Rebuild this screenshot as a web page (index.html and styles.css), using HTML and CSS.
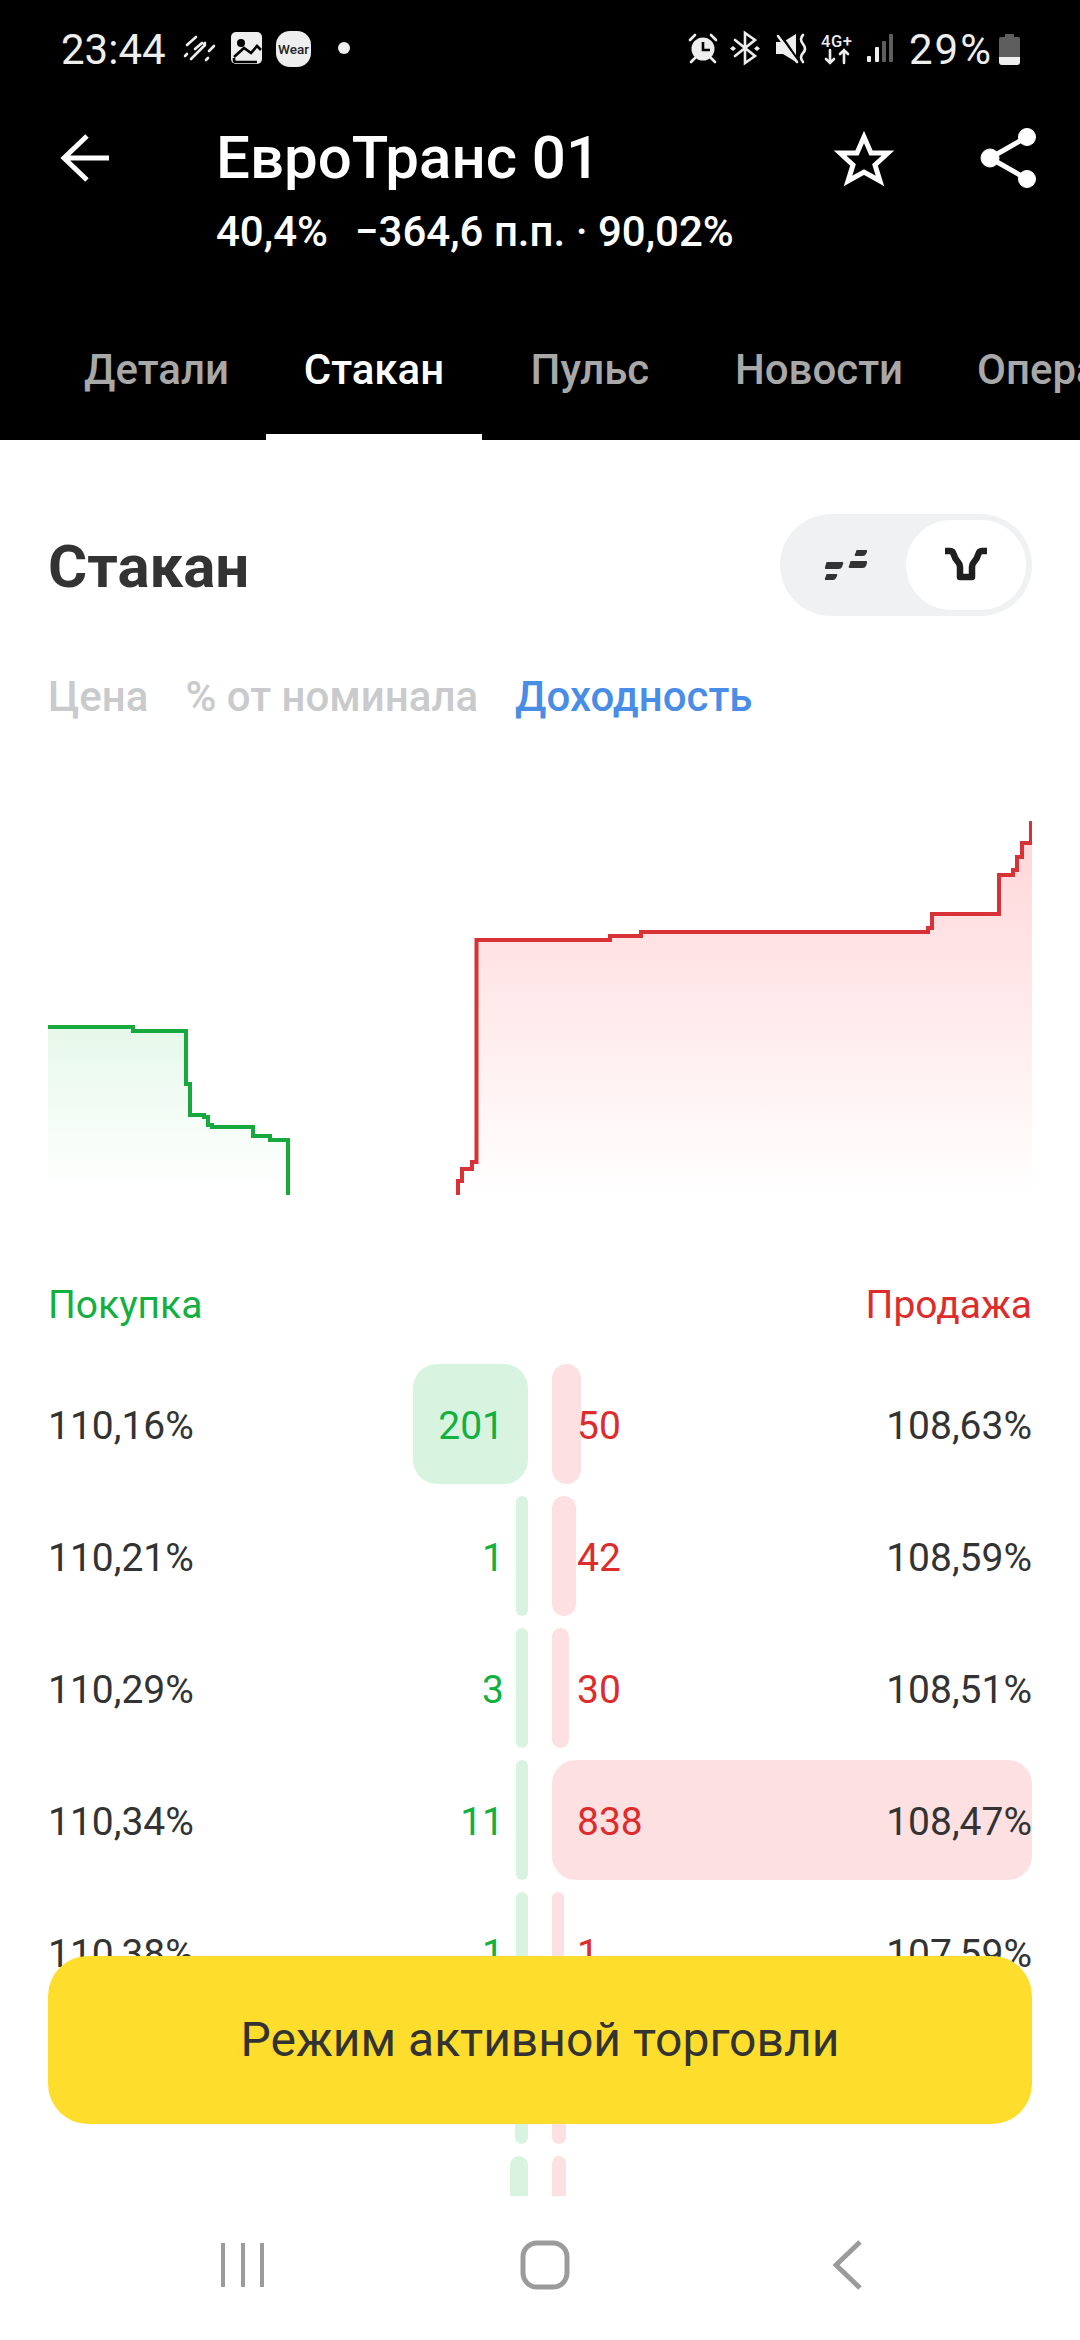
FILE: index.html
```html
<!DOCTYPE html>
<html lang="ru">
<head>
    <meta charset="UTF-8">
    <meta name="viewport" content="width=device-width, initial-scale=1.0">
    <title>ЕвроТранс 01 - Стакан</title>
    <link rel="stylesheet" href="styles.css">
</head>
<body>
    <div class="page">
        <div class="top">
            <div class="status">
                <span class="clock">23:44</span>
                <svg class="status-left" viewBox="181 30 170 40">
                    <g class="stroke-white">
                        <path d="M186 46l9-8M194 50l7-6M190 60l14-14M205 61l2-2M208 52l5-5M184 57l2-2M203 45l1-1"/>
                    </g>
                    <rect class="fill-light" x="230" y="33" width="31" height="32" rx="5"/>
                    <circle class="fill-black" cx="240" cy="44" r="4"/>
                    <path class="stroke-black" d="M233 58l10-9 7 5 6-7 4 4M233 59v2q0 2 2 2h21"/>
                    <rect class="fill-light" x="275" y="32" width="35" height="36" rx="14"/>
                    <text class="wear" x="292.500" y="54.500" text-anchor="middle">Wear</text>
                    <circle class="fill-light" cx="343" cy="49" r="6"/>
                </svg>
                <svg class="status-right" viewBox="688 30 206 40">
                    <circle class="fill-light" cx="703" cy="50" r="11.500"/>
                    <path class="stroke-black" d="M703 43v8h7"/>
                    <path class="stroke-white" d="M690 41l5-5M716 41l-5-5M695 59l-4 4M711 59l4 4"/>
                    <path class="stroke-white" d="M735 41l20 16-10 7V34l10 7-20 16"/>
                    <path class="fill-light" d="M733 47l3 2.500-3 2.500-3-2.500zM757 47l3 2.500-3 2.500-3-2.500z"/>
                    <path class="fill-light" d="M776 43h7l13-8v28l-13-8h-7z"/>
                    <path class="stroke-black" d="M780 35l19 28"/>
                    <path class="stroke-white" d="M778 37l19 26M803 36q-4 4 0 9t0 9 0 9"/>
                    <text class="net" x="821" y="48">4G+</text>
                    <path class="stroke-white" d="M830 51v13M826 60l4 4 4-4M844 64V51M840 55l4-4 4 4"/>
                    <rect class="fill-light" x="867" y="57" width="4" height="6" rx="1"/>
                    <rect class="fill-light" x="875" y="48" width="4" height="15" rx="1"/>
                    <rect class="fill-dim" x="882" y="42" width="4" height="21" rx="1"/>
                    <rect class="fill-dim" x="889" y="35" width="4" height="28" rx="1"/>
                </svg>
                <span class="percent">29%</span>
                <svg class="battery" viewBox="0 0 21 31">
                    <path class="fill-dim" d="M6 0h9v3h4q2 0 2 2v18H0V5q0-2 2-2h4z"/>
                    <path class="fill-light" d="M0 23h21v5q0 3-3 3H3q-3 0-3-3z"/>
                </svg>
            </div>

            <div class="header">
                <svg class="back" viewBox="60 128 50 60">
                    <path d="M109 158H64M87 136l-23 22 23 22"/>
                </svg>
                <div class="title-block">
                    <div class="title">ЕвроТранс 01</div>
                    <div class="subtitle"><span>40,4%</span><span class="spread">−364,6 п.п. · 90,02%</span></div>
                </div>
                <svg class="star" viewBox="834 128 60 60">
                    <path d="M864 137l7 16h17l-13 12 5 16-16-9-16 9 5-16-13-12h17z"/>
                </svg>
                <svg class="share" viewBox="980 128 60 60">
                    <circle cx="1027" cy="137" r="8.500"/>
                    <circle cx="990" cy="158" r="9"/>
                    <circle cx="1027" cy="179" r="8.500"/>
                    <path d="M1027 137l-37 21 37 21"/>
                </svg>
            </div>

            <div class="tabs">
                <div class="tab">Детали</div>
                <div class="tab active">Стакан</div>
                <div class="tab">Пульс</div>
                <div class="tab">Новости</div>
                <div class="tab">Операции</div>
            </div>
        </div>

        <div class="content">
            <div class="book-head">
                <h2>Стакан</h2>
                <div class="view-switch">
                    <div class="view-btn">
                        <svg viewBox="825 549 42 32">
                            <path d="M827 562h15q2 0 1 2l-1 3q-1 2-3 2h-13q-2 0-1-2l1-3q0-2 1-2zM827 574h9q2 0 1 2l-1 2q-1 2-3 2h-7q-2 0-1-2l1-2q0-2 1-2zM851 561h15q2 0 1 2l-1 3q-1 2-3 2h-13q-2 0-1-2l1-3q0-2 1-2zM857 550h9q2 0 1 2l-1 2q-1 2-3 2h-7q-2 0-1-2l1-2q0-2 1-2z"/>
                        </svg>
                    </div>
                    <div class="view-btn on">
                        <svg viewBox="942 546 48 38">
                            <path d="M945 551H950Q953 551 954 555Q955 559 958 562Q960 564 960 567V577H972V567Q972 564 974 562Q977 559 978 555Q979 551 982 551H987"/>
                        </svg>
                    </div>
                </div>
            </div>

            <div class="modes">
                <span>Цена</span>
                <span>% от номинала</span>
                <span class="current">Доходность</span>
            </div>

            <svg class="depth" viewBox="48 810 984 400">
                <defs>
                    <linearGradient id="bidFill" gradientUnits="userSpaceOnUse" x1="0" y1="1027" x2="0" y2="1192">
                        <stop class="bid-top" offset="0"/>
                        <stop class="fade" offset="1"/>
                    </linearGradient>
                    <linearGradient id="askFill" gradientUnits="userSpaceOnUse" x1="0" y1="830" x2="0" y2="1195">
                        <stop class="ask-top" offset="0"/>
                        <stop class="fade" offset="1"/>
                    </linearGradient>
                </defs>
                <path class="bid-area" d="M48 1027H133V1031H186V1084H190V1115H204V1117H208V1125H212V1127H253V1136H270V1140H288V1195H48z"/>
                <path class="ask-area" d="M458 1195V1181H462V1169H472V1162H476.500V940H610V936H641V932H928V928H932V914H999V875H1013V870H1017V857H1022V843H1032V1195z"/>
                <path class="bid-line" d="M48 1027H133V1031H186V1084H190V1115H204V1117H208V1125H212V1127H253V1136H270V1140H288V1195"/>
                <path class="ask-line" d="M458 1195V1181H462V1169H472V1162H476.500V940H610V936H641V932H928V928H932V914H999V875H1013V870H1017V857H1022V843H1031V821"/>
            </svg>

            <div class="sides">
                <span class="buy">Покупка</span>
                <span class="sell">Продажа</span>
            </div>

            <div class="book">
                <div class="row">
                    <div class="cell bid"><i class="bar" style="width:115px"></i><span>110,16%</span><b>201</b></div>
                    <div class="cell ask"><i class="bar" style="width:29px"></i><b>50</b><span>108,63%</span></div>
                </div>
                <div class="row">
                    <div class="cell bid"><i class="bar" style="width:12px"></i><span>110,21%</span><b>1</b></div>
                    <div class="cell ask"><i class="bar" style="width:24px"></i><b>42</b><span>108,59%</span></div>
                </div>
                <div class="row">
                    <div class="cell bid"><i class="bar" style="width:12px"></i><span>110,29%</span><b>3</b></div>
                    <div class="cell ask"><i class="bar" style="width:17px"></i><b>30</b><span>108,51%</span></div>
                </div>
                <div class="row">
                    <div class="cell bid"><i class="bar" style="width:12px"></i><span>110,34%</span><b>11</b></div>
                    <div class="cell ask"><i class="bar" style="width:480px"></i><b>838</b><span>108,47%</span></div>
                </div>
                <div class="row">
                    <div class="cell bid"><i class="bar" style="width:12px"></i><span>110,38%</span><b>1</b></div>
                    <div class="cell ask"><i class="bar" style="width:12px"></i><b>1</b><span>107,59%</span></div>
                </div>
                <div class="row">
                    <div class="cell bid"><i class="bar" style="width:13px"></i></div>
                    <div class="cell ask"><i class="bar" style="width:14px"></i></div>
                </div>
                <div class="row">
                    <div class="cell bid"><i class="bar" style="width:18px"></i></div>
                    <div class="cell ask"><i class="bar" style="width:14px"></i></div>
                </div>
            </div>
        </div>

        <div class="navbar">
            <svg class="nav-recent" viewBox="0 0 48 48"><path d="M4 2v44M24 2v44M43 2v44"/></svg>
            <svg class="nav-home" viewBox="0 0 50 50"><rect x="3" y="3" width="44" height="44" rx="14"/></svg>
            <svg class="nav-back" viewBox="0 0 30 50"><path d="M27 2L3 25l24 23"/></svg>
        </div>

        <div class="trade-btn">Режим активной торговли</div>
    </div>
</body>
</html>
```

FILE: styles.css
```css
body {
    margin: 0;
    background: #fff;
    font-family: Roboto, "Noto Sans", sans-serif;
    color: #333;
}
.page {
    position: relative;
    width: 1080px;
    height: 2340px;
    overflow: hidden;
}

/* black top part */
.top {
    background: #000;
    color: #fff;
    height: 440px;
}
.status {
    display: flex;
    align-items: center;
    height: 98px;
    padding: 0 60px 0 61px;
    color: #eee;
    font-size: 42px;
}
.status-left {
    width: 170px;
    height: 40px;
    margin-left: 16px;
}
.status-right {
    width: 206px;
    height: 40px;
    margin-left: auto;
}
.percent {
    margin-left: 15px;
    letter-spacing: 2px;
}
.battery {
    width: 21px;
    height: 31px;
    margin-left: 6px;
}
.stroke-white {
    fill: none;
    stroke: #eee;
    stroke-width: 2.6;
    stroke-linecap: round;
}
.stroke-black {
    fill: none;
    stroke: #000;
    stroke-width: 2.6;
}
.fill-light {
    fill: #eee;
}
.fill-dim {
    fill: #5e5e5e;
}
.fill-black {
    fill: #000;
}
.wear {
    font-size: 13.500px;
    font-weight: 500;
    fill: #222;
}
.net {
    font-size: 16.500px;
    font-weight: 500;
    letter-spacing: 0.6px;
    fill: #eee;
}

.header {
    display: flex;
    align-items: flex-start;
    height: 202px;
    padding-top: 27px;
    box-sizing: border-box;
}
.back {
    width: 50px;
    height: 60px;
    margin: 3px 0 0 60px;
    fill: none;
    stroke: #fff;
    stroke-width: 5;
}
.title-block {
    flex: 1;
    margin-left: 106px;
}
.title {
    font-size: 60px;
    font-weight: 500;
    line-height: 66px;
}
.subtitle {
    margin-top: 17px;
    font-size: 42px;
    font-weight: 500;
    line-height: 48px;
    white-space: nowrap;
}
.spread {
    margin-left: 27px;
}
.star {
    width: 60px;
    height: 60px;
    margin-top: 3px;
    fill: none;
    stroke: #fff;
    stroke-width: 5;
}
.share {
    width: 60px;
    height: 60px;
    margin: 3px 40px 0 86px;
    fill: #fff;
    stroke: #fff;
}
.share path {
    fill: none;
    stroke-width: 5;
}

.tabs {
    display: flex;
    height: 140px;
    padding-left: 47px;
    overflow: hidden;
}
.tab {
    flex: none;
    box-sizing: border-box;
    min-width: 216px;
    padding: 0 37px;
    font-size: 42px;
    font-weight: 500;
    line-height: 140px;
    text-align: center;
    color: #a8a8a8;
}
.tab.active {
    color: #fff;
    border-bottom: 6px solid #fff;
}

/* white part */
.content {
    padding: 74px 48px 0;
    height: 1756px;
    box-sizing: border-box;
}
.book-head {
    display: flex;
    justify-content: space-between;
    align-items: center;
    height: 102px;
}
h2 {
    margin: 2px 0 0;
    font-size: 60px;
    font-weight: 700;
    color: #333;
}
.view-switch {
    display: flex;
    box-sizing: border-box;
    width: 252px;
    height: 102px;
    padding: 6px;
    background: #eff1f2;
    border-radius: 51px;
}
.view-btn {
    display: flex;
    align-items: center;
    justify-content: center;
    width: 120px;
    border-radius: 45px;
}
.view-btn svg {
    width: 42px;
    height: 32px;
    fill: #333;
}
.view-btn.on {
    margin-left: auto;
    background: #fff;
}
.view-btn.on svg {
    width: 48px;
    height: 38px;
    fill: none;
    stroke: #1f1f1f;
    stroke-width: 6.500;
    stroke-linejoin: round;
}

.modes {
    display: flex;
    gap: 37px;
    margin-top: 56px;
    font-size: 42px;
    font-weight: 500;
    line-height: 50px;
    color: #c9cacc;
}
.modes .current {
    color: #4a8de6;
}

.depth {
    display: block;
    width: 984px;
    height: 400px;
    margin-top: 88px;
}
.bid-top {
    stop-color: #e6f8ea;
}
.ask-top {
    stop-color: #ffd6d8;
}
.fade {
    stop-color: #fff;
}
.bid-area {
    fill: url(#bidFill);
}
.ask-area {
    fill: url(#askFill);
}
.bid-line,
.ask-line {
    fill: none;
    stroke-width: 4;
}
.bid-line {
    stroke: #17a83e;
}
.ask-line {
    stroke: #d83236;
}

.sides {
    display: flex;
    justify-content: space-between;
    margin-top: 70px;
    font-size: 39px;
    line-height: 50px;
}
.buy {
    color: #12b03f;
}
.sell {
    color: #dd2c2c;
}

.book {
    display: flex;
    flex-direction: column;
    gap: 12px;
    height: 832px;
    margin-top: 34px;
    overflow: hidden;
}
.row {
    display: grid;
    grid-template-columns: 480px 480px;
    gap: 24px;
    flex: none;
    font-size: 39px;
}
.cell {
    position: relative;
    display: flex;
    justify-content: space-between;
    align-items: center;
    box-sizing: border-box;
    height: 120px;
    padding-top: 3px;
}
.cell span,
.cell b {
    position: relative;
    font-weight: 400;
}
.bar {
    position: absolute;
    top: 0;
    bottom: 0;
    border-radius: 24px;
}
.bid {
    padding-right: 24px;
}
.bid b {
    color: #12b03f;
}
.bid .bar {
    right: 0;
    background: #d8f4e1;
}
.ask {
    padding-left: 25px;
}
.ask b {
    color: #dd2c2c;
}
.ask .bar {
    left: 0;
    background: #fde0e2;
}

.navbar {
    display: flex;
    align-items: center;
    height: 144px;
    padding: 0 0 6px 92px;
    box-sizing: border-box;
    background: #fff;
}
.navbar svg {
    display: block;
    fill: none;
    stroke: #9b9b9b;
}
.nav-recent {
    width: 48px;
    height: 48px;
    margin-left: 127px;
    stroke-width: 4;
}
.nav-home {
    width: 50px;
    height: 50px;
    margin-left: 253px;
    stroke-width: 5;
}
.nav-back {
    width: 30px;
    height: 50px;
    margin-left: 263px;
    stroke-width: 5;
}

.trade-btn {
    position: absolute;
    left: 48px;
    right: 48px;
    bottom: 216px;
    height: 168px;
    border-radius: 40px;
    background: #ffdd2d;
    font-size: 48px;
    line-height: 168px;
    text-align: center;
    color: #333;
}
```
